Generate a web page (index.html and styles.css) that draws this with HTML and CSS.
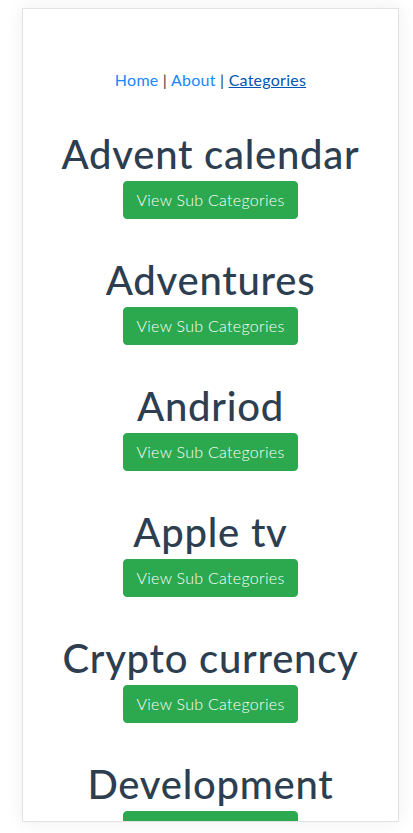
FILE: index.html
```html
<!DOCTYPE html>
<html lang="en">
<head>
    <meta charset="UTF-8">
    <meta name="viewport" content="width=device-width, initial-scale=1.0">
    <title>Categories</title>
    <link rel="stylesheet" href="styles.css">
</head>
<body>
    <div class="page">
        <div id="app" class="card">
            <nav class="nav">
                <a href="#" class="nav-link">Home</a> |
                <a href="#" class="nav-link">About</a> |
                <a href="#" class="nav-link active">Categories</a>
            </nav>

            <div class="categories">
                <div class="category">
                    <h1>Advent calendar</h1>
                    <button class="btn-success">View Sub Categories</button>
                </div>
                <div class="category">
                    <h1>Adventures</h1>
                    <button class="btn-success">View Sub Categories</button>
                </div>
                <div class="category">
                    <h1>Andriod</h1>
                    <button class="btn-success">View Sub Categories</button>
                </div>
                <div class="category">
                    <h1>Apple tv</h1>
                    <button class="btn-success">View Sub Categories</button>
                </div>
                <div class="category">
                    <h1>Crypto currency</h1>
                    <button class="btn-success">View Sub Categories</button>
                </div>
                <div class="category">
                    <h1>Development</h1>
                    <button class="btn-success">View Sub Categories</button>
                </div>
            </div>
        </div>
    </div>
</body>
</html>
```

FILE: styles.css
```css
/* Generel styling */
html, body {
    margin: 0;
    padding: 0;
    background-color: #fff;
    font-family: Lato, 'Liberation Sans', sans-serif;
    color: #2c3e50;
}

* {
    box-sizing: border-box;
}

.page {
    padding: 8px 14px 0 22px;
    height: 833px;
    overflow: hidden;
}

/* Kortet klipper det sidste punkt, som i originalen */
.card {
    height: 814px;
    overflow: hidden;
    background-color: #fff;
    border: 1px solid #e2e2e2;
    box-shadow: 0 0 18px rgba(0, 0, 0, 0.07);
    text-align: center;
    padding-top: 59px;
}

.nav {
    font-size: 16px;
    line-height: 24px;
    letter-spacing: 0.25px;
}

.nav-link {
    color: #1a86ff;
    text-decoration: none;
}

.nav-link.active {
    color: #0056b3;
    text-decoration: underline;
}

.categories {
    margin-top: 38px;
}

.category {
    margin-bottom: 37px;
}

.category h1 {
    font-size: 40px;
    font-weight: 500;
    line-height: 48px;
    letter-spacing: 0.75px;
    margin: 0 0 3px;
}

.btn-success {
    background-color: #2ca84e;
    color: #fff;
    border: 1px solid #2ca84e;
    border-radius: 4px;
    padding: 6px 12px;
    font-family: inherit;
    font-size: 16px;
    font-weight: 300;
    line-height: 24px;
    letter-spacing: 0.3px;
    height: 38px;
    cursor: pointer;
}
```
